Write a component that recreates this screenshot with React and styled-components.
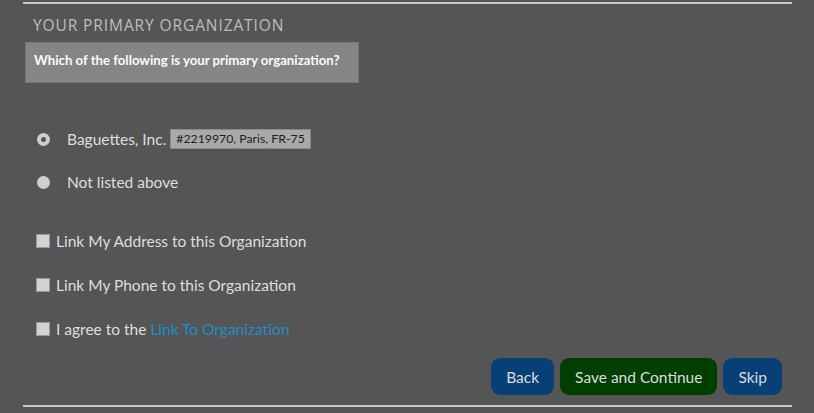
import React from 'react'
import styled, { createGlobalStyle } from 'styled-components'

const GlobalStyle = createGlobalStyle`
  html, body {
    margin: 0;
    padding: 0;
    background: #555555;
  }
  body {
    font-family: Lato, "Open Sans", sans-serif;
  }
`

const Page = styled.div`
  width: 814px;
  height: 413px;
  background: #555555;
  box-sizing: border-box;
  padding: 2px 22px 0 23px;
`

const Section = styled.section`
  border-top: 2px solid #c8c8c8;
  border-bottom: 2px solid #c8c8c8;
  height: 405px;
  box-sizing: border-box;
  display: flex;
  flex-direction: column;
`

const Heading = styled.h2`
  margin: 11px 0 0 10px;
  font-family: "Open Sans", Lato, sans-serif;
  font-weight: 400;
  font-size: 15.5px;
  line-height: 20px;
  color: #bdbdbd;
  letter-spacing: 0.9px;
`

const Question = styled.div`
  margin: 7px 0 0 2px;
  width: 334px;
  height: 41px;
  box-sizing: border-box;
  background: #858585;
  border: 1px solid #777;
  padding: 9px 0 0 8px;
  font-size: 13.2px;
  font-weight: 700;
  color: #fafafa;
`

const Options = styled.div`
  margin-top: 45px;
  display: flex;
  flex-direction: column;
  gap: 21px;
  padding-left: 14px;
`

const OptionRow = styled.div`
  display: flex;
  align-items: center;
  height: 22px;
`

const Radio = styled.span`
  width: 13px;
  height: 13px;
  border-radius: 50%;
  background: #cfcfcf;
  display: flex;
  align-items: center;
  justify-content: center;
  margin-right: 17px;

  &::after {
    content: '';
    width: 5px;
    height: 5px;
    border-radius: 50%;
    background: #555;
    display: ${p => (p.$checked ? 'block' : 'none')};
  }
`

const Label = styled.span`
  font-size: 15.5px;
  color: #dedede;
`

const Badge = styled.span`
  margin-left: 4px;
  background: #a9a9a9;
  border: 1px solid #8a8a8a;
  color: #1e1e1e;
  font-size: 12.3px;
  padding: 2px 5px 2px 5px;
  line-height: 14px;
`

const Checks = styled.div`
  margin-top: 37px;
  display: flex;
  flex-direction: column;
  gap: 22px;
  padding-left: 13px;
`

const CheckRow = styled.label`
  display: flex;
  align-items: center;
  height: 22px;
`

const Box = styled.span`
  width: 14px;
  height: 14px;
  box-sizing: border-box;
  background: #d2d2d2;
  border: 1px solid #9a9a9a;
  margin-right: 6px;
`

const Link = styled.a`
  color: #1a8fcb;
  text-decoration: none;
`

const Actions = styled.div`
  margin-top: 18px;
  display: flex;
  justify-content: flex-end;
  gap: 6px;
  padding-right: 10px;
`

const Button = styled.button`
  height: 37px;
  border: none;
  border-radius: 9px;
  padding: 0 15px;
  font-family: Lato, sans-serif;
  font-size: 15.5px;
  color: #dcdcdc;
  background: ${p => (p.$variant === 'primary' ? '#013f00' : '#073f77')};
  cursor: pointer;
`

export default function App() {
  return (
    <>
      <GlobalStyle />
      <Page>
        <Section>
          <Heading>YOUR PRIMARY ORGANIZATION</Heading>
          <Question>Which of the following is your primary organization?</Question>
          <Options>
            <OptionRow>
              <Radio $checked />
              <Label>Baguettes, Inc.</Label>
              <Badge>#2219970, Paris, FR-75</Badge>
            </OptionRow>
            <OptionRow>
              <Radio />
              <Label>Not listed above</Label>
            </OptionRow>
          </Options>
          <Checks>
            <CheckRow>
              <Box />
              <Label>Link My Address to this Organization</Label>
            </CheckRow>
            <CheckRow>
              <Box />
              <Label>Link My Phone to this Organization</Label>
            </CheckRow>
            <CheckRow>
              <Box />
              <Label>
                I agree to the <Link href="#">Link To Organization</Link>
              </Label>
            </CheckRow>
          </Checks>
          <Actions>
            <Button>Back</Button>
            <Button $variant="primary">Save and Continue</Button>
            <Button>Skip</Button>
          </Actions>
        </Section>
      </Page>
    </>
  )
}
